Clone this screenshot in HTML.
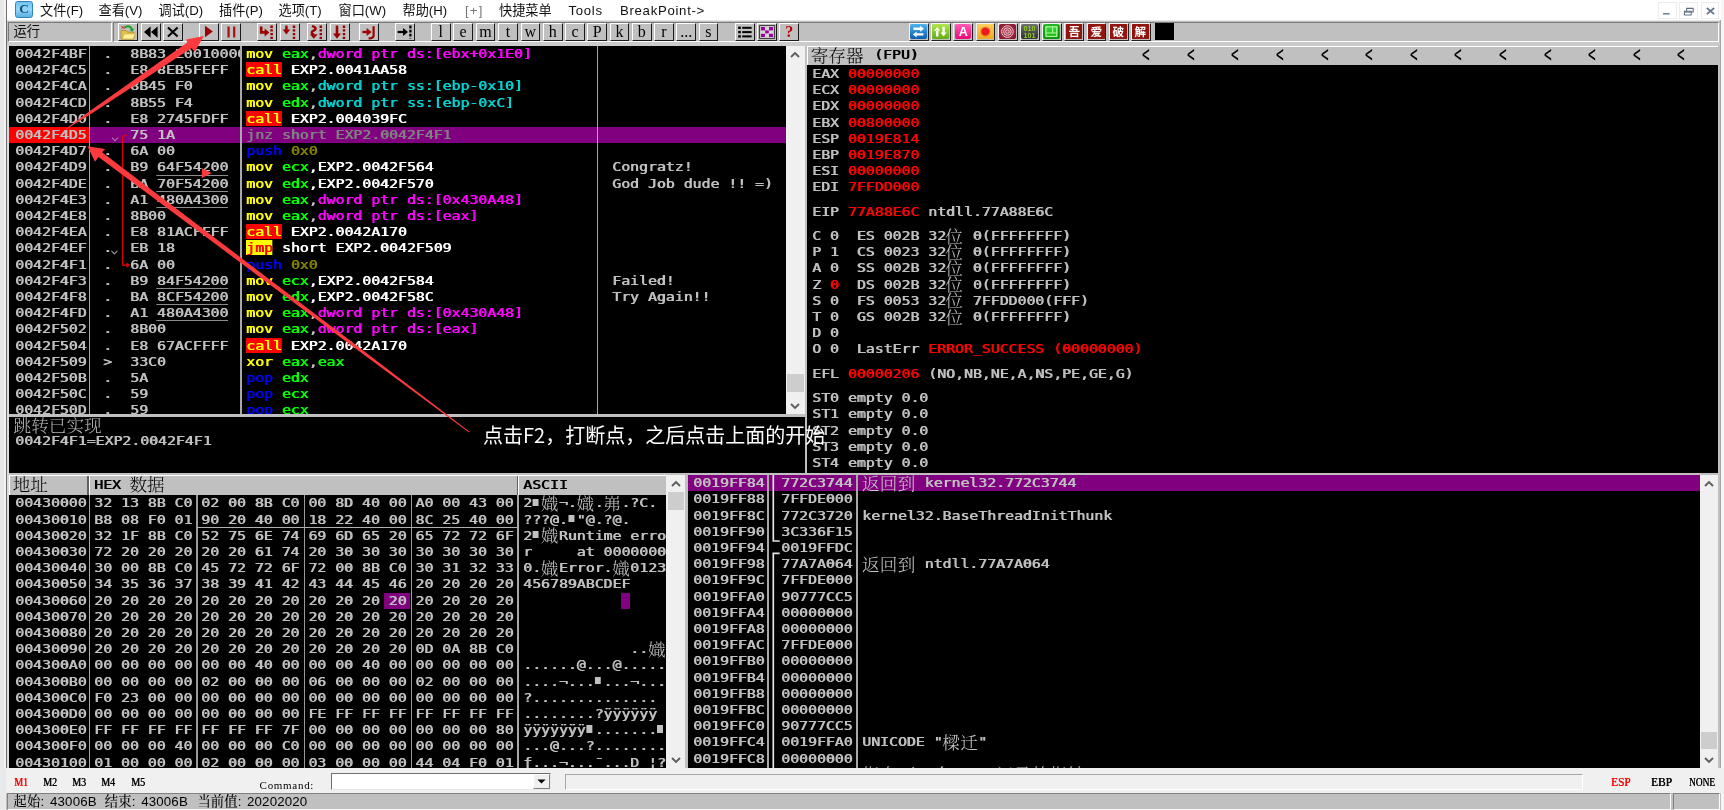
<!DOCTYPE html><html lang="zh"><head><meta charset="utf-8"><title>OllyDbg - EXP2</title><style>
*{box-sizing:border-box}
html,body{margin:0;padding:0}
body{will-change:transform;width:1724px;height:810px;position:relative;overflow:hidden;background:#c0c0c0;font-family:"Liberation Sans","Noto Sans CJK SC",sans-serif}
.abs,.p,.t,.cj,.b,.ic,.hl{position:absolute}
.p{background:#000;overflow:hidden}
.t{white-space:pre;text-shadow:.65px 0 0 currentColor;font:12.4px/16.2px "DejaVu Sans Mono","Liberation Mono",monospace;transform:scaleX(1.1962);transform-origin:0 0;color:#c0c0c0;height:16.2px}
.cj{white-space:pre;font:300 17.6px/18px "Noto Serif CJK SC","Noto Sans CJK SC",serif;color:#b4b4b4}
.sq{display:inline-block;position:relative;width:7.465px;height:16.2px;overflow:hidden;vertical-align:top;color:transparent;text-shadow:none}.sq::after{content:"";position:absolute;left:.6px;top:3.3px;width:4.7px;height:7.2px;background:#c0c0c0}
.g{color:#c0c0c0}.w{color:#fff}.y{color:#ff0}.gr{color:#0f0}.m{color:#f0f}.c{color:#00d2d2}.bl{color:#00f}.dy{color:#808000}.r{color:#f00}.dg{color:#808080}
.call{background:#f00;color:#ff0}.jmp{background:#ff0;color:#f00}
.u{border-bottom:1.6px solid #8c8c8c;display:inline-block;height:16.2px}
.b{background:#c0c0c0;border-top:1px solid #fff;border-left:1px solid #fff;border-right:1.5px solid #1a1a1a;border-bottom:1.5px solid #1a1a1a;text-align:center;color:#000;font:15px/15px "Liberation Serif",serif}
.b svg{position:absolute;left:0;top:0}
.ic{border:1px solid;border-color:#e8e8e8 #303030 #303030 #e8e8e8}
.vl{position:absolute;width:1.6px;background:#a8a8a8}
.menu span{position:absolute;top:.7px;font:13.2px/20px "Liberation Sans","Noto Sans CJK SC",sans-serif;color:#111;white-space:pre}
.sb{position:absolute;background:#f0f0f0}
.th{position:absolute;background:#cdcdcd}
.hd{position:absolute;background:#c0c0c0;border-top:1.3px solid #fff;border-left:1.3px solid #fff;overflow:hidden}
.hd .t{color:#000}
.hd .cj{color:#000}
.sm{position:absolute;font:bold 11.5px/12px "Liberation Serif","Noto Serif CJK SC",serif;color:#000;white-space:pre;transform-origin:0 0}
.st{position:absolute;top:794.4px;font:500 13.3px/16px "Liberation Sans","Noto Serif CJK SC",serif;color:#000;white-space:pre;letter-spacing:.15px}
</style></head><body>
<div class="abs" style="left:0;top:0;width:1724px;height:20.3px;background:#fff"></div>
<div class="abs" style="left:0;top:20.3px;width:1724px;height:1.4px;background:#e6e6e6"></div>
<div class="abs" style="left:0;top:0;width:4.2px;height:810px;background:#e5e7e9"></div>
<div class="abs" style="left:4.2px;top:0;width:1.4px;height:810px;background:#f3f3f3"></div>
<div class="abs" style="left:5.6px;top:0;width:1.5px;height:768px;background:#6c6c6c"></div>
<div class="abs" style="left:7.1px;top:21px;width:1.6px;height:747px;background:#dcdcdc"></div>
<div class="abs" style="left:1720.2px;top:20px;width:1px;height:790px;background:#a4a4a4"></div>
<div class="abs" style="left:1721.2px;top:0;width:2.8px;height:810px;background:#f6f6f6"></div>
<div class="abs" style="left:15px;top:1.2px;width:18px;height:16.6px;border-radius:2.6px;border:1.2px solid #2f84b4;background:linear-gradient(#6fc4ee,#93d6f7 50%,#58b2e2);text-align:center;font:bold 13.4px/13.6px 'Liberation Serif',serif;color:#174a78">C</div>
<div class="menu">
<span style="left:40.0px;">文件(F)</span>
<span style="left:98.5px;">查看(V)</span>
<span style="left:158.5px;">调试(D)</span>
<span style="left:219.0px;">插件(P)</span>
<span style="left:278.5px;">选项(T)</span>
<span style="left:338.5px;">窗口(W)</span>
<span style="left:402.5px;">帮助(H)</span>
<span style="left:465.0px;color:#777;letter-spacing:1.2px;">[+]</span>
<span style="left:499.0px;">快捷菜单</span>
<span style="left:568.5px;letter-spacing:.7px;">Tools</span>
<span style="left:620.0px;letter-spacing:.7px;">BreakPoint-&gt;</span>
</div>
<div class="abs" style="left:1658.0px;top:1.5px;width:18.6px;height:17.6px;border:1px solid #ececec;background:#fff"></div>
<div class="abs" style="left:1679.4px;top:1.5px;width:18.6px;height:17.6px;border:1px solid #ececec;background:#fff"></div>
<div class="abs" style="left:1700.6px;top:1.5px;width:18.6px;height:17.6px;border:1px solid #ececec;background:#fff"></div>
<svg class="abs" style="left:1658px;top:1.5px" width="62" height="18" viewBox="0 0 62 18"><g stroke="#62748a" stroke-width="1.4" fill="none"><path d="M5 11.8h6.6"/><path d="M26.4 9.2h6.8v3.8h-6.8z M28.6 9V6.4h6.6v3.6h-1.8" stroke-width="1.1"/><path d="M26.4 10h6.8" stroke-width="1.3"/><path d="M48.8 6l7.4 6.2M56.2 6l-7.4 6.2" stroke-width="1.7"/></g></svg>
<div class="abs" style="left:7.1px;top:21.4px;width:1713px;height:21.2px;background:#c0c0c0"></div>
<div class="abs" style="left:8px;top:21.6px;width:103.5px;height:20.6px;background:#c0c0c0;border:1.3px solid;border-color:#7a7a7a #fff #fff #7a7a7a"></div>
<div class="abs" style="left:13.4px;top:22px;font:13.3px/17px 'Noto Sans CJK SC',sans-serif;color:#111">运行</div>
<div class="abs" style="left:112.8px;top:21.6px;width:1606.4px;height:20.6px;border:1.3px solid;border-color:#7a7a7a #fff #fff #7a7a7a"></div>
<div class="abs" style="left:7.1px;top:42.1px;width:1713px;height:3.9px;background:#cbcbcb"></div>
<div class="b" style="left:118.2px;top:22.6px;width:20.0px;height:18.2px;"><svg width="18" height="16" viewBox="0 0 18 16"><path d="M2 6.5h5l1.4 1.6H15V15H2z" fill="#e9c24a" stroke="#b08a20" stroke-width=".8"/><path d="M3.2 15l2-5.2h11L14.2 15z" fill="#fff29a" stroke="#c9a63a" stroke-width=".7"/><path d="M5 3.2c3-3.4 7.6-2.2 8.6 1.6l1.6-.4-1.8 3.2-3-1.8 1.5-.4C11 3 8 2.6 6.4 4.4z" fill="#14a21e"/><path d="M2.2 2.2l3.4 2.4M2.4 4.8l3-2.6" stroke="#e02020" stroke-width="1"/></svg></div>
<div class="b" style="left:140.8px;top:22.6px;width:20.0px;height:18.2px;"><svg width="18" height="16" viewBox="0 0 18 16"><path d="M8.6 2.4v11.4L2 8.1zM15.6 2.4v11.4L9 8.1z" fill="#000"/></svg></div>
<div class="b" style="left:162.9px;top:22.6px;width:20.0px;height:18.2px;"><svg width="18" height="16" viewBox="0 0 18 16"><path d="M4 3.6l9.6 9M13.6 3.6l-9.6 9" stroke="#000" stroke-width="2.1" fill="none"/></svg></div>
<div class="b" style="left:198.8px;top:22.6px;width:20.0px;height:18.2px;"><svg width="18" height="16" viewBox="0 0 18 16"><path d="M5 1.8l7.8 5.7L5 13.2z" fill="#9c0000"/></svg></div>
<div class="b" style="left:220.9px;top:22.6px;width:20.0px;height:18.2px;"><svg width="18" height="16" viewBox="0 0 18 16"><path d="M6.6 2.6v11M12.2 2.6v11" stroke="#b01010" stroke-width="2.3" fill="none"/></svg></div>
<div class="b" style="left:257.3px;top:22.6px;width:20.0px;height:18.2px;"><svg width="18" height="16" viewBox="0 0 18 16"><path d="M3.2 2.4v6h4.6" stroke="#9c0000" stroke-width="2.6" fill="none"/><path d="M6.6 4.4l4.8 4L6.6 12.4z" fill="#9c0000"/><path d="M13.6 1.6v13.4" stroke="#9c0000" stroke-width="2.5" stroke-dasharray="2.3 1.4" fill="none"/></svg></div>
<div class="b" style="left:279.6px;top:22.6px;width:20.0px;height:18.2px;"><svg width="18" height="16" viewBox="0 0 18 16"><path d="M5.4 1.6v5" stroke="#9c0000" stroke-width="2.5" fill="none"/><path d="M1.6 5.4h7.6L5.4 10.4z" fill="#9c0000"/><path d="M13 1.6v13.4" stroke="#9c0000" stroke-width="2.5" stroke-dasharray="2.3 1.4" fill="none"/></svg></div>
<div class="b" style="left:307.4px;top:22.6px;width:20.0px;height:18.2px;"><svg width="18" height="16" viewBox="0 0 18 16"><path d="M4 2.2c4.4 1 4.4 3.2 1.6 4.4c-2.8 1.2-2.4 2.8 0.4 4" stroke="#9c0000" stroke-width="2.4" fill="none"/><path d="M1.8 10.2h8L5.8 14.8z" fill="#9c0000"/><path d="M12.8 1.6v13.4" stroke="#9c0000" stroke-width="2.5" stroke-dasharray="2.3 1.4" fill="none"/></svg></div>
<div class="b" style="left:329.6px;top:22.6px;width:20.0px;height:18.2px;"><svg width="18" height="16" viewBox="0 0 18 16"><path d="M6 1.6v9.4" stroke="#9c0000" stroke-width="2.6" fill="none"/><path d="M2 9.6h8L6 14.8z" fill="#9c0000"/><path d="M13 1.6v13.4" stroke="#9c0000" stroke-width="2.5" stroke-dasharray="2.3 1.4" fill="none"/></svg></div>
<div class="b" style="left:359.4px;top:22.6px;width:20.0px;height:18.2px;"><svg width="18" height="16" viewBox="0 0 18 16"><path d="M2.4 8h6" stroke="#9c0000" stroke-width="2.4" fill="none"/><path d="M6.6 4l5 4-5 4z" fill="#9c0000"/><path d="M13.6 2.2v9c0 2.6-1.6 3.2-5 3.2" stroke="#9c0000" stroke-width="2.2" fill="none"/></svg></div>
<div class="b" style="left:395.2px;top:22.6px;width:20.0px;height:18.2px;"><svg width="18" height="16" viewBox="0 0 18 16"><path d="M1.6 8h7" stroke="#000" stroke-width="2.2" fill="none"/><path d="M7 4l5 4-5 4z" fill="#000"/><path d="M14.4 1.6v13" stroke="#000" stroke-width="2.3" stroke-dasharray="2.8 1.3" fill="none"/></svg></div>
<div class="b" style="left:431.0px;top:22.6px;width:19.6px;height:18.2px;font-size:16px;line-height:16.6px;">l</div>
<div class="b" style="left:453.2px;top:22.6px;width:19.6px;height:18.2px;font-size:16px;line-height:16.6px;">e</div>
<div class="b" style="left:475.6px;top:22.6px;width:19.6px;height:18.2px;font-size:16px;line-height:16.6px;">m</div>
<div class="b" style="left:498.2px;top:22.6px;width:19.6px;height:18.2px;font-size:16px;line-height:16.6px;">t</div>
<div class="b" style="left:520.6px;top:22.6px;width:19.6px;height:18.2px;font-size:16px;line-height:16.6px;">w</div>
<div class="b" style="left:543.0px;top:22.6px;width:19.6px;height:18.2px;font-size:16px;line-height:16.6px;">h</div>
<div class="b" style="left:565.2px;top:22.6px;width:19.6px;height:18.2px;font-size:16px;line-height:16.6px;">c</div>
<div class="b" style="left:587.4px;top:22.6px;width:19.6px;height:18.2px;font-size:16px;line-height:16.6px;">P</div>
<div class="b" style="left:609.8px;top:22.6px;width:19.6px;height:18.2px;font-size:16px;line-height:16.6px;">k</div>
<div class="b" style="left:632.0px;top:22.6px;width:19.6px;height:18.2px;font-size:16px;line-height:16.6px;">b</div>
<div class="b" style="left:654.2px;top:22.6px;width:19.6px;height:18.2px;font-size:16px;line-height:16.6px;">r</div>
<div class="b" style="left:676.4px;top:22.6px;width:19.6px;height:18.2px;font-size:16px;line-height:16.6px;letter-spacing:0px;">...</div>
<div class="b" style="left:698.6px;top:22.6px;width:19.6px;height:18.2px;font-size:16px;line-height:16.6px;">s</div>
<div class="b" style="left:735.0px;top:22.6px;width:19.6px;height:18.2px;"><svg width="18" height="16" viewBox="0 0 18 16"><g fill="#000"><rect x="2.2" y="2.6" width="2.6" height="2.4"/><rect x="6.2" y="2.8" width="9.4" height="2"/><rect x="2.2" y="6.9" width="2.6" height="2.4"/><rect x="6.2" y="7.1" width="9.4" height="2"/><rect x="2.2" y="11.2" width="2.6" height="2.4"/><rect x="6.2" y="11.4" width="9.4" height="2"/></g></svg></div>
<div class="b" style="left:757.2px;top:22.6px;width:19.6px;height:18.2px;"><svg width="18" height="16" viewBox="0 0 18 16"><rect x="1.6" y="1.6" width="14.8" height="12.8" fill="#d8d8d8" stroke="#333" stroke-width="1"/><g fill="#a000a0"><rect x="3" y="3" width="4" height="3.4"/><rect x="11" y="3" width="4" height="3.4"/><rect x="7.2" y="6.4" width="3.6" height="3"/><rect x="3" y="9.8" width="4" height="3.2"/><rect x="11" y="9.8" width="4" height="3.2"/></g></svg></div>
<div class="b" style="left:779.4px;top:22.6px;width:19.6px;height:18.2px;"><b style="color:#c00000;font:bold 16px/15px 'Liberation Serif',serif">?</b></div>
<div class="ic" style="left:909.0px;top:22.6px;width:19.8px;height:18.2px;background:#c0c0c0;border-width:1px 1.4px 1.4px 1px;border-color:#f4f4f4 #222 #222 #f4f4f4"><div style="position:absolute;left:.3px;top:.3px;width:16.8px;height:15.2px;border-radius:2.6px;background:linear-gradient(#4ab4f0,#0a5cae);overflow:hidden"><svg style="position:absolute;left:0;top:0" width="16.8" height="15.2" viewBox="0 0 16.8 15.2"><g fill="#fff"><path d="M3.4 3.6h6.8v2.4H3.4zM10.2 1.8v6L14 4.8z"/><path d="M6.6 9.2h6.8v2.4H6.6zM6.6 7.4v6L2.8 10.4z"/></g></svg></div></div>
<div class="ic" style="left:931.2px;top:22.6px;width:19.8px;height:18.2px;background:#c0c0c0;border-width:1px 1.4px 1.4px 1px;border-color:#f4f4f4 #222 #222 #f4f4f4"><div style="position:absolute;left:.3px;top:.3px;width:16.8px;height:15.2px;border-radius:2.6px;background:linear-gradient(#b0e848,#62ac14);overflow:hidden"><svg style="position:absolute;left:0;top:0" width="16.8" height="15.2" viewBox="0 0 16.8 15.2"><g fill="#fff"><path d="M4 6.4h2.4v6.2H4zM2.2 7h6L5.2 2.8z"/><path d="M10.4 2.8h2.4V9h-2.4zM8.6 8.4h6l-3 4.2z"/></g></svg></div></div>
<div class="ic" style="left:953.4px;top:22.6px;width:19.8px;height:18.2px;background:#c0c0c0;border-width:1px 1.4px 1.4px 1px;border-color:#f4f4f4 #222 #222 #f4f4f4"><div style="position:absolute;left:.3px;top:.3px;width:16.8px;height:15.2px;border-radius:2.6px;background:linear-gradient(#ff5cb4,#f00878);overflow:hidden"><svg style="position:absolute;left:0;top:0" width="16.8" height="15.2" viewBox="0 0 16.8 15.2"><text x="8.4" y="12.2" text-anchor="middle" font-family="Liberation Sans,sans-serif" font-weight="bold" font-size="12.6" fill="#fff">A</text></svg></div></div>
<div class="ic" style="left:975.6px;top:22.6px;width:19.8px;height:18.2px;background:#c0c0c0;border-width:1px 1.4px 1.4px 1px;border-color:#f4f4f4 #222 #222 #f4f4f4"><div style="position:absolute;left:.3px;top:.3px;width:16.8px;height:15.2px;border-radius:2.6px;background:linear-gradient(#fad060,#f0a820);overflow:hidden"><svg style="position:absolute;left:0;top:0" width="16.8" height="15.2" viewBox="0 0 16.8 15.2"><circle cx="8.4" cy="7.6" r="4.9" fill="#e86a30"/><circle cx="8.4" cy="7.6" r="3.7" fill="#f01818"/></svg></div></div>
<div class="ic" style="left:997.8px;top:22.6px;width:19.8px;height:18.2px;background:#c0c0c0;border-width:1px 1.4px 1.4px 1px;border-color:#f4f4f4 #222 #222 #f4f4f4"><div style="position:absolute;left:.3px;top:.3px;width:16.8px;height:15.2px;border-radius:2.6px;background:radial-gradient(#c04860,#7c0c22);overflow:hidden"><svg style="position:absolute;left:0;top:0" width="16.8" height="15.2" viewBox="0 0 16.8 15.2"><g fill="none" stroke="#f0c8d0" stroke-width="1"><circle cx="8.4" cy="7.6" r="5.8"/><circle cx="8.4" cy="7.6" r="3.8"/><circle cx="8.4" cy="7.6" r="1.8"/></g></svg></div></div>
<div class="ic" style="left:1020.0px;top:22.6px;width:19.8px;height:18.2px;background:#c0c0c0;border-width:1px 1.4px 1.4px 1px;border-color:#f4f4f4 #222 #222 #f4f4f4"><div style="position:absolute;left:.3px;top:.3px;width:16.8px;height:15.2px;border-radius:2.6px;background:linear-gradient(#707070,#303030);overflow:hidden"><svg style="position:absolute;left:0;top:0" width="16.8" height="15.2" viewBox="0 0 16.8 15.2"><text x="8.4" y="6.9" text-anchor="middle" font-family="Liberation Sans,sans-serif" font-weight="bold" font-size="7.2" fill="#90d020">010</text><text x="8.4" y="13.9" text-anchor="middle" font-family="Liberation Sans,sans-serif" font-weight="bold" font-size="7.2" fill="#90d020">101</text></svg></div></div>
<div class="ic" style="left:1042.2px;top:22.6px;width:19.8px;height:18.2px;background:#c0c0c0;border-width:1px 1.4px 1.4px 1px;border-color:#f4f4f4 #222 #222 #f4f4f4"><div style="position:absolute;left:.3px;top:.3px;width:16.8px;height:15.2px;border-radius:2.6px;background:linear-gradient(#40e040,#10b010);overflow:hidden"><svg style="position:absolute;left:0;top:0" width="16.8" height="15.2" viewBox="0 0 16.8 15.2"><g fill="none" stroke="#b8f8a0" stroke-width="1.1"><rect x="3" y="2.8" width="10.8" height="9.6"/><path d="M9.6 2.8v6.2M3 9h10.8"/></g><rect x="1" y="1" width="14.8" height="13.2" rx="2" fill="none" stroke="#0a8a0a" stroke-width="1.2"/></svg></div></div>
<div class="ic" style="left:1064.4px;top:22.6px;width:19.8px;height:18.2px;background:#c0c0c0;border-width:1px 1.4px 1.4px 1px;border-color:#f4f4f4 #222 #222 #f4f4f4"><div style="position:absolute;left:.3px;top:.3px;width:16.8px;height:15.2px;border-radius:0.5px;background:#92140e;overflow:hidden"><svg style="position:absolute;left:0;top:0" width="16.8" height="15.2" viewBox="0 0 16.8 15.2"><text x="8.4" y="11.9" text-anchor="middle" font-family="Noto Sans CJK SC,sans-serif" font-weight="700" font-size="11.6" fill="#fff">吾</text></svg></div></div>
<div class="ic" style="left:1086.6px;top:22.6px;width:19.8px;height:18.2px;background:#c0c0c0;border-width:1px 1.4px 1.4px 1px;border-color:#f4f4f4 #222 #222 #f4f4f4"><div style="position:absolute;left:.3px;top:.3px;width:16.8px;height:15.2px;border-radius:0.5px;background:#92140e;overflow:hidden"><svg style="position:absolute;left:0;top:0" width="16.8" height="15.2" viewBox="0 0 16.8 15.2"><text x="8.4" y="11.9" text-anchor="middle" font-family="Noto Sans CJK SC,sans-serif" font-weight="700" font-size="11.6" fill="#fff">爱</text></svg></div></div>
<div class="ic" style="left:1108.8px;top:22.6px;width:19.8px;height:18.2px;background:#c0c0c0;border-width:1px 1.4px 1.4px 1px;border-color:#f4f4f4 #222 #222 #f4f4f4"><div style="position:absolute;left:.3px;top:.3px;width:16.8px;height:15.2px;border-radius:0.5px;background:#92140e;overflow:hidden"><svg style="position:absolute;left:0;top:0" width="16.8" height="15.2" viewBox="0 0 16.8 15.2"><text x="8.4" y="11.9" text-anchor="middle" font-family="Noto Sans CJK SC,sans-serif" font-weight="700" font-size="11.6" fill="#fff">破</text></svg></div></div>
<div class="ic" style="left:1131.0px;top:22.6px;width:19.8px;height:18.2px;background:#c0c0c0;border-width:1px 1.4px 1.4px 1px;border-color:#f4f4f4 #222 #222 #f4f4f4"><div style="position:absolute;left:.3px;top:.3px;width:16.8px;height:15.2px;border-radius:0.5px;background:#92140e;overflow:hidden"><svg style="position:absolute;left:0;top:0" width="16.8" height="15.2" viewBox="0 0 16.8 15.2"><text x="8.4" y="11.9" text-anchor="middle" font-family="Noto Sans CJK SC,sans-serif" font-weight="700" font-size="11.6" fill="#fff">解</text></svg></div></div>
<div class="abs" style="left:1154.6px;top:22.8px;width:19.6px;height:17.6px;background:#000"></div>
<div class="p" style="left:8.8px;top:46.0px;width:777.0px;height:368.2px">
<div class="hl" style="left:0;top:81.30px;width:80.2px;height:16.20px;background:#f00"></div>
<div class="hl" style="left:81.6px;top:81.30px;width:700.0px;height:16.20px;background:#800080"></div>
<div class="vl" style="left:79.8px;top:0;height:368.2px"></div>
<div class="vl" style="left:231.4px;top:0;height:368.2px"></div>
<div class="vl" style="left:588.0px;top:0;height:368.2px"></div>
<div class="abs" style="left:81.6px;top:0;width:149.8px;height:368.2px;overflow:hidden">
<div class="t " style="left:13.10px;top:0.00px;">.  </div>
<div class="t " style="left:39.60px;top:0.00px;">8B83 E0010000</div>
<div class="t " style="left:13.10px;top:16.20px;">.  </div>
<div class="t " style="left:39.60px;top:16.20px;">E8 8EB5FEFF</div>
<div class="t " style="left:13.10px;top:32.40px;">.  </div>
<div class="t " style="left:39.60px;top:32.40px;">8B45 F0</div>
<div class="t " style="left:13.10px;top:48.60px;">.  </div>
<div class="t " style="left:39.60px;top:48.60px;">8B55 F4</div>
<div class="t " style="left:13.10px;top:64.80px;">.  </div>
<div class="t " style="left:39.60px;top:64.80px;">E8 2745FDFF</div>
<div class="t " style="left:13.10px;top:81.00px;">   </div>
<div class="t " style="left:39.60px;top:81.00px;">75 1A</div>
<div class="t " style="left:13.10px;top:97.20px;">.  </div>
<div class="t " style="left:39.60px;top:97.20px;">6A 00</div>
<div class="t " style="left:13.10px;top:113.40px;">.  </div>
<div class="t " style="left:39.60px;top:113.40px;">B9 <span class="u">64F54200</span></div>
<div class="t " style="left:13.10px;top:129.60px;">.  </div>
<div class="t " style="left:39.60px;top:129.60px;">BA <span class="u">70F54200</span></div>
<div class="t " style="left:13.10px;top:145.80px;">.  </div>
<div class="t " style="left:39.60px;top:145.80px;">A1 <span class="u">480A4300</span></div>
<div class="t " style="left:13.10px;top:162.00px;">.  </div>
<div class="t " style="left:39.60px;top:162.00px;">8B00</div>
<div class="t " style="left:13.10px;top:178.20px;">.  </div>
<div class="t " style="left:39.60px;top:178.20px;">E8 81ACFFFF</div>
<div class="t " style="left:13.10px;top:194.40px;">.  </div>
<div class="t " style="left:39.60px;top:194.40px;">EB 18</div>
<div class="t " style="left:13.10px;top:210.60px;">.  </div>
<div class="t " style="left:39.60px;top:210.60px;">6A 00</div>
<div class="t " style="left:13.10px;top:226.80px;">.  </div>
<div class="t " style="left:39.60px;top:226.80px;">B9 <span class="u">84F54200</span></div>
<div class="t " style="left:13.10px;top:243.00px;">.  </div>
<div class="t " style="left:39.60px;top:243.00px;">BA <span class="u">8CF54200</span></div>
<div class="t " style="left:13.10px;top:259.20px;">.  </div>
<div class="t " style="left:39.60px;top:259.20px;">A1 <span class="u">480A4300</span></div>
<div class="t " style="left:13.10px;top:275.40px;">.  </div>
<div class="t " style="left:39.60px;top:275.40px;">8B00</div>
<div class="t " style="left:13.10px;top:291.60px;">.  </div>
<div class="t " style="left:39.60px;top:291.60px;">E8 67ACFFFF</div>
<div class="t " style="left:13.10px;top:307.80px;">&gt;  </div>
<div class="t " style="left:39.60px;top:307.80px;">33C0</div>
<div class="t " style="left:13.10px;top:324.00px;">.  </div>
<div class="t " style="left:39.60px;top:324.00px;">5A</div>
<div class="t " style="left:13.10px;top:340.20px;">.  </div>
<div class="t " style="left:39.60px;top:340.20px;">59</div>
<div class="t " style="left:13.10px;top:356.40px;">.  </div>
<div class="t " style="left:39.60px;top:356.40px;">59</div>
</div>
<div class="t " style="left:6.20px;top:0.00px;">0042F4BF</div>
<div class="t " style="left:237.00px;top:0.00px;"><span class="y">mov </span><span class="gr">eax</span><span class="g">,</span><span class="m">dword ptr ds:[ebx+0x1E0]</span></div>
<div class="t " style="left:6.20px;top:16.20px;">0042F4C5</div>
<div class="t " style="left:237.00px;top:16.20px;"><span class="call">call</span><span class="w"> EXP2.0041AA58</span></div>
<div class="t " style="left:6.20px;top:32.40px;">0042F4CA</div>
<div class="t " style="left:237.00px;top:32.40px;"><span class="y">mov </span><span class="gr">eax</span><span class="g">,</span><span class="c">dword ptr ss:[ebp-0x10]</span></div>
<div class="t " style="left:6.20px;top:48.60px;">0042F4CD</div>
<div class="t " style="left:237.00px;top:48.60px;"><span class="y">mov </span><span class="gr">edx</span><span class="g">,</span><span class="c">dword ptr ss:[ebp-0xC]</span></div>
<div class="t " style="left:6.20px;top:64.80px;">0042F4D0</div>
<div class="t " style="left:237.00px;top:64.80px;"><span class="call">call</span><span class="w"> EXP2.004039FC</span></div>
<div class="t " style="left:6.20px;top:81.00px;">0042F4D5</div>
<div class="t " style="left:237.00px;top:81.00px;"><span class="dg">jnz short EXP2.0042F4F1</span></div>
<div class="t " style="left:6.20px;top:97.20px;">0042F4D7</div>
<div class="t " style="left:237.00px;top:97.20px;"><span class="bl">push </span><span class="dy">0x0</span></div>
<div class="t " style="left:6.20px;top:113.40px;">0042F4D9</div>
<div class="t " style="left:237.00px;top:113.40px;"><span class="y">mov </span><span class="gr">ecx</span><span class="w">,EXP2.0042F564</span></div>
<div class="t " style="left:603.20px;top:113.40px;">Congratz!</div>
<div class="t " style="left:6.20px;top:129.60px;">0042F4DE</div>
<div class="t " style="left:237.00px;top:129.60px;"><span class="y">mov </span><span class="gr">edx</span><span class="w">,EXP2.0042F570</span></div>
<div class="t " style="left:603.20px;top:129.60px;">God Job dude !! =)</div>
<div class="t " style="left:6.20px;top:145.80px;">0042F4E3</div>
<div class="t " style="left:237.00px;top:145.80px;"><span class="y">mov </span><span class="gr">eax</span><span class="g">,</span><span class="m">dword ptr ds:[0x430A48]</span></div>
<div class="t " style="left:6.20px;top:162.00px;">0042F4E8</div>
<div class="t " style="left:237.00px;top:162.00px;"><span class="y">mov </span><span class="gr">eax</span><span class="g">,</span><span class="m">dword ptr ds:[eax]</span></div>
<div class="t " style="left:6.20px;top:178.20px;">0042F4EA</div>
<div class="t " style="left:237.00px;top:178.20px;"><span class="call">call</span><span class="w"> EXP2.0042A170</span></div>
<div class="t " style="left:6.20px;top:194.40px;">0042F4EF</div>
<div class="t " style="left:237.00px;top:194.40px;"><span class="jmp">jmp</span><span class="w"> short EXP2.0042F509</span></div>
<div class="t " style="left:6.20px;top:210.60px;">0042F4F1</div>
<div class="t " style="left:237.00px;top:210.60px;"><span class="bl">push </span><span class="dy">0x0</span></div>
<div class="t " style="left:6.20px;top:226.80px;">0042F4F3</div>
<div class="t " style="left:237.00px;top:226.80px;"><span class="y">mov </span><span class="gr">ecx</span><span class="w">,EXP2.0042F584</span></div>
<div class="t " style="left:603.20px;top:226.80px;">Failed!</div>
<div class="t " style="left:6.20px;top:243.00px;">0042F4F8</div>
<div class="t " style="left:237.00px;top:243.00px;"><span class="y">mov </span><span class="gr">edx</span><span class="w">,EXP2.0042F58C</span></div>
<div class="t " style="left:603.20px;top:243.00px;">Try Again!!</div>
<div class="t " style="left:6.20px;top:259.20px;">0042F4FD</div>
<div class="t " style="left:237.00px;top:259.20px;"><span class="y">mov </span><span class="gr">eax</span><span class="g">,</span><span class="m">dword ptr ds:[0x430A48]</span></div>
<div class="t " style="left:6.20px;top:275.40px;">0042F502</div>
<div class="t " style="left:237.00px;top:275.40px;"><span class="y">mov </span><span class="gr">eax</span><span class="g">,</span><span class="m">dword ptr ds:[eax]</span></div>
<div class="t " style="left:6.20px;top:291.60px;">0042F504</div>
<div class="t " style="left:237.00px;top:291.60px;"><span class="call">call</span><span class="w"> EXP2.0042A170</span></div>
<div class="t " style="left:6.20px;top:307.80px;">0042F509</div>
<div class="t " style="left:237.00px;top:307.80px;"><span class="y">xor </span><span class="gr">eax</span><span class="g">,</span><span class="gr">eax</span></div>
<div class="t " style="left:6.20px;top:324.00px;">0042F50B</div>
<div class="t " style="left:237.00px;top:324.00px;"><span class="bl">pop </span><span class="gr">edx</span></div>
<div class="t " style="left:6.20px;top:340.20px;">0042F50C</div>
<div class="t " style="left:237.00px;top:340.20px;"><span class="bl">pop </span><span class="gr">ecx</span></div>
<div class="t " style="left:6.20px;top:356.40px;">0042F50D</div>
<div class="t " style="left:237.00px;top:356.40px;"><span class="bl">pop </span><span class="gr">ecx</span></div>
<svg class="abs" style="left:0;top:0" width="777" height="369" viewBox="8.8 46.0 777 369">
<path d="M111.8 137.6l3 3 3-3" stroke="#b070b0" stroke-width="1.1" fill="none"/>
<path d="M111.2 250.9l3 3 3-3" stroke="#9a9a9a" stroke-width="1.1" fill="none"/>
<path d="M126.6 135.4l-2.6.2-1.6 1.4V265.1h5" stroke="#e60000" stroke-width="1.1" fill="none"/>
<path d="M126.2 262.5l3.8 2.6-3.8 2.6z" fill="#e60000"/>
</svg>
</div>
<div class="sb" style="left:785.8px;top:45.9px;width:19px;height:368.3px"></div>
<div class="th" style="left:787.2px;top:374.4px;width:16.4px;height:17.8px"></div>
<svg class="abs" style="left:789.3px;top:51.2px" width="12" height="8" viewBox="-6 -4 12 8"><path d="M-4 2.0L0 -2.0L4 2.0" stroke="#5e5e5e" stroke-width="1.9" fill="none"/></svg>
<svg class="abs" style="left:789.3px;top:402.0px" width="12" height="8" viewBox="-6 -4 12 8"><path d="M-4 -2.0L0 2.0L4 -2.0" stroke="#5e5e5e" stroke-width="1.9" fill="none"/></svg>
<div class="p" style="left:8.8px;top:416.6px;width:796px;height:56px">
<div class="cj" style="left:4.80px;top:-1.10px;">跳转已实现</div>
<div class="t " style="left:6.20px;top:16.40px;">0042F4F1=EXP2.0042F4F1</div>
</div>
<div class="hd" style="left:806.8px;top:45.8px;width:911.7px;height:18.9px">
<div class="cj" style="left:2.90px;top:-1.20px;color:#000">寄存器</div>
<div class="t " style="left:56.98px;top:0.65px;"> (FPU)</div>
<div class="t " style="left:334.50px;top:0.30px;text-shadow:none;transform:scale(1.029,1.8);transform-origin:0 53%">&lt;</div>
<div class="t " style="left:379.10px;top:0.30px;text-shadow:none;transform:scale(1.029,1.8);transform-origin:0 53%">&lt;</div>
<div class="t " style="left:423.70px;top:0.30px;text-shadow:none;transform:scale(1.029,1.8);transform-origin:0 53%">&lt;</div>
<div class="t " style="left:468.30px;top:0.30px;text-shadow:none;transform:scale(1.029,1.8);transform-origin:0 53%">&lt;</div>
<div class="t " style="left:512.90px;top:0.30px;text-shadow:none;transform:scale(1.029,1.8);transform-origin:0 53%">&lt;</div>
<div class="t " style="left:557.50px;top:0.30px;text-shadow:none;transform:scale(1.029,1.8);transform-origin:0 53%">&lt;</div>
<div class="t " style="left:602.10px;top:0.30px;text-shadow:none;transform:scale(1.029,1.8);transform-origin:0 53%">&lt;</div>
<div class="t " style="left:646.70px;top:0.30px;text-shadow:none;transform:scale(1.029,1.8);transform-origin:0 53%">&lt;</div>
<div class="t " style="left:691.30px;top:0.30px;text-shadow:none;transform:scale(1.029,1.8);transform-origin:0 53%">&lt;</div>
<div class="t " style="left:735.90px;top:0.30px;text-shadow:none;transform:scale(1.029,1.8);transform-origin:0 53%">&lt;</div>
<div class="t " style="left:780.50px;top:0.30px;text-shadow:none;transform:scale(1.029,1.8);transform-origin:0 53%">&lt;</div>
<div class="t " style="left:825.10px;top:0.30px;text-shadow:none;transform:scale(1.029,1.8);transform-origin:0 53%">&lt;</div>
<div class="t " style="left:869.70px;top:0.30px;text-shadow:none;transform:scale(1.029,1.8);transform-origin:0 53%">&lt;</div>
</div>
<div class="p" style="left:806.8px;top:64.7px;width:911.7px;height:407.9px">
<div class="t " style="left:5.00px;top:1.40px;">EAX <span class="r">00000000</span></div>
<div class="t " style="left:5.00px;top:17.60px;">ECX <span class="r">00000000</span></div>
<div class="t " style="left:5.00px;top:33.80px;">EDX <span class="r">00000000</span></div>
<div class="t " style="left:5.00px;top:50.00px;">EBX <span class="r">00800000</span></div>
<div class="t " style="left:5.00px;top:66.20px;">ESP <span class="r">0019E814</span></div>
<div class="t " style="left:5.00px;top:82.40px;">EBP <span class="r">0019E870</span></div>
<div class="t " style="left:5.00px;top:98.60px;">ESI <span class="r">00000000</span></div>
<div class="t " style="left:5.00px;top:114.80px;">EDI <span class="r">7FFDD000</span></div>
<div class="t " style="left:5.00px;top:139.60px;">EIP <span class="r">77A88E6C</span> ntdll.77A88E6C</div>
<div class="t " style="left:5.00px;top:163.40px;">C 0  ES 002B 32   0(FFFFFFFF)</div>
<div class="cj" style="left:138.35px;top:161.90px;color:#c0c0c0">位</div>
<div class="t " style="left:5.00px;top:179.60px;">P 1  CS 0023 32   0(FFFFFFFF)</div>
<div class="cj" style="left:138.35px;top:178.10px;color:#c0c0c0">位</div>
<div class="t " style="left:5.00px;top:195.80px;">A 0  SS 002B 32   0(FFFFFFFF)</div>
<div class="cj" style="left:138.35px;top:194.30px;color:#c0c0c0">位</div>
<div class="t " style="left:5.00px;top:212.00px;">Z <span class="r">0</span>  DS 002B 32   0(FFFFFFFF)</div>
<div class="cj" style="left:138.35px;top:210.50px;color:#c0c0c0">位</div>
<div class="t " style="left:5.00px;top:228.20px;">S 0  FS 0053 32   7FFDD000(FFF)</div>
<div class="cj" style="left:138.35px;top:226.70px;color:#c0c0c0">位</div>
<div class="t " style="left:5.00px;top:244.40px;">T 0  GS 002B 32   0(FFFFFFFF)</div>
<div class="cj" style="left:138.35px;top:242.90px;color:#c0c0c0">位</div>
<div class="t " style="left:5.00px;top:260.60px;">D 0</div>
<div class="t " style="left:5.00px;top:276.80px;">O 0  LastErr <span class="r">ERROR_SUCCESS (00000000)</span></div>
<div class="t " style="left:5.00px;top:301.60px;">EFL <span class="r">00000206</span> (NO,NB,NE,A,NS,PE,GE,G)</div>
<div class="t " style="left:5.00px;top:325.60px;">ST0 empty 0.0</div>
<div class="t " style="left:5.00px;top:341.80px;">ST1 empty 0.0</div>
<div class="t " style="left:5.00px;top:358.00px;">ST2 empty 0.0</div>
<div class="t " style="left:5.00px;top:374.20px;">ST3 empty 0.0</div>
<div class="t " style="left:5.00px;top:390.40px;">ST4 empty 0.0</div>
</div>
<div class="hd" style="left:8.8px;top:475.2px;width:657.6px;height:19.4px">
<div class="cj" style="left:2.90px;top:-1.00px;color:#000">地址</div>
<div class="t " style="left:83.90px;top:0.80px;">HEX </div>
<div class="cj" style="left:119.62px;top:-1.00px;color:#000">数据</div>
<div class="t " style="left:512.90px;top:0.80px;">ASCII</div>
<div class="abs" style="left:77.7px;top:0;width:1.2px;height:19px;background:#606060"></div><div class="abs" style="left:79.0px;top:0;width:1.3px;height:19px;background:#fff"></div>
<div class="abs" style="left:507.1px;top:0;width:1.2px;height:19px;background:#606060"></div><div class="abs" style="left:508.4px;top:0;width:1.3px;height:19px;background:#fff"></div>
</div>
<div class="p" style="left:8.8px;top:494.6px;width:657.6px;height:273.7px">
<div class="vl" style="left:79.8px;top:0;height:280px"></div>
<div class="vl" style="left:508.6px;top:0;height:280px"></div>
<div class="vl" style="left:187.6px;top:0;height:280px;width:1.2px;background:#9a9a9a"></div>
<div class="vl" style="left:294.8px;top:0;height:280px;width:1.2px;background:#9a9a9a"></div>
<div class="vl" style="left:402.0px;top:0;height:280px;width:1.2px;background:#9a9a9a"></div>
<div class="abs" style="left:188.2px;top:32.2px;width:320.4px;height:1.3px;background:#b0b0b0"></div>
<div class="hl" style="left:375.4px;top:98.0px;width:26.2px;height:16.20px;background:#800080"></div>
<div class="hl" style="left:612.2px;top:98.0px;width:8.93px;height:16.20px;background:#800080"></div>
<div class="t " style="left:6.20px;top:0.80px;">00430000</div>
<div class="t " style="left:85.20px;top:0.80px;">32 13 8B C0 02 00 8B C0 00 8D 40 00 A0 00 43 00</div>
<div class="t " style="left:514.20px;top:0.80px;">2<span class="sq">■</span>  ¬.  .  .?C.</div>
<div class="cj" style="left:532.06px;top:-0.80px;color:#c0c0c0">嬂</div>
<div class="cj" style="left:567.78px;top:-0.80px;color:#c0c0c0">嬂</div>
<div class="cj" style="left:594.57px;top:-0.80px;color:#c0c0c0">岪</div>
<div class="t " style="left:6.20px;top:17.00px;">00430010</div>
<div class="t " style="left:85.20px;top:17.00px;">B8 08 F0 01 90 20 40 00 18 22 40 00 8C 25 40 00</div>
<div class="t " style="left:514.20px;top:17.00px;">???@.<span class="sq">■</span>"@.?@.</div>
<div class="t " style="left:6.20px;top:33.20px;">00430020</div>
<div class="t " style="left:85.20px;top:33.20px;">32 1F 8B C0 52 75 6E 74 69 6D 65 20 65 72 72 6F</div>
<div class="t " style="left:514.20px;top:33.20px;">2<span class="sq">■</span>  Runtime erro</div>
<div class="cj" style="left:532.06px;top:31.60px;color:#c0c0c0">嬂</div>
<div class="t " style="left:6.20px;top:49.40px;">00430030</div>
<div class="t " style="left:85.20px;top:49.40px;">72 20 20 20 20 20 61 74 20 30 30 30 30 30 30 30</div>
<div class="t " style="left:514.20px;top:49.40px;">r     at 0000000</div>
<div class="t " style="left:6.20px;top:65.60px;">00430040</div>
<div class="t " style="left:85.20px;top:65.60px;">30 00 8B C0 45 72 72 6F 72 00 8B C0 30 31 32 33</div>
<div class="t " style="left:514.20px;top:65.60px;">0.  Error.  0123</div>
<div class="cj" style="left:532.06px;top:64.00px;color:#c0c0c0">嬂</div>
<div class="cj" style="left:603.50px;top:64.00px;color:#c0c0c0">嬂</div>
<div class="t " style="left:6.20px;top:81.80px;">00430050</div>
<div class="t " style="left:85.20px;top:81.80px;">34 35 36 37 38 39 41 42 43 44 45 46 20 20 20 20</div>
<div class="t " style="left:514.20px;top:81.80px;">456789ABCDEF</div>
<div class="t " style="left:6.20px;top:98.00px;">00430060</div>
<div class="t " style="left:85.20px;top:98.00px;">20 20 20 20 20 20 20 20 20 20 20 20 20 20 20 20</div>
<div class="t " style="left:514.20px;top:98.00px;"></div>
<div class="t " style="left:6.20px;top:114.20px;">00430070</div>
<div class="t " style="left:85.20px;top:114.20px;">20 20 20 20 20 20 20 20 20 20 20 20 20 20 20 20</div>
<div class="t " style="left:514.20px;top:114.20px;"></div>
<div class="t " style="left:6.20px;top:130.40px;">00430080</div>
<div class="t " style="left:85.20px;top:130.40px;">20 20 20 20 20 20 20 20 20 20 20 20 20 20 20 20</div>
<div class="t " style="left:514.20px;top:130.40px;"></div>
<div class="t " style="left:6.20px;top:146.60px;">00430090</div>
<div class="t " style="left:85.20px;top:146.60px;">20 20 20 20 20 20 20 20 20 20 20 20 0D 0A 8B C0</div>
<div class="t " style="left:514.20px;top:146.60px;">            ..  </div>
<div class="cj" style="left:639.22px;top:145.00px;color:#c0c0c0">嬂</div>
<div class="t " style="left:6.20px;top:162.80px;">004300A0</div>
<div class="t " style="left:85.20px;top:162.80px;">00 00 00 00 00 00 40 00 00 00 40 00 00 00 00 00</div>
<div class="t " style="left:514.20px;top:162.80px;">......@...@.....</div>
<div class="t " style="left:6.20px;top:179.00px;">004300B0</div>
<div class="t " style="left:85.20px;top:179.00px;">00 00 00 00 02 00 00 00 06 00 00 00 02 00 00 00</div>
<div class="t " style="left:514.20px;top:179.00px;">....¬...<span class="sq">■</span>...¬...</div>
<div class="t " style="left:6.20px;top:195.20px;">004300C0</div>
<div class="t " style="left:85.20px;top:195.20px;">F0 23 00 00 00 00 00 00 00 00 00 00 00 00 00 00</div>
<div class="t " style="left:514.20px;top:195.20px;">?..............</div>
<div class="t " style="left:6.20px;top:211.40px;">004300D0</div>
<div class="t " style="left:85.20px;top:211.40px;">00 00 00 00 00 00 00 00 FE FF FF FF FF FF FF FF</div>
<div class="t " style="left:514.20px;top:211.40px;">........?ÿÿÿÿÿÿ</div>
<div class="t " style="left:6.20px;top:227.60px;">004300E0</div>
<div class="t " style="left:85.20px;top:227.60px;">FF FF FF FF FF FF FF 7F 00 00 00 00 00 00 00 80</div>
<div class="t " style="left:514.20px;top:227.60px;">ÿÿÿÿÿÿÿ<span class="sq">■</span>.......<span class="sq">■</span></div>
<div class="t " style="left:6.20px;top:243.80px;">004300F0</div>
<div class="t " style="left:85.20px;top:243.80px;">00 00 00 40 00 00 00 C0 00 00 00 00 00 00 00 00</div>
<div class="t " style="left:514.20px;top:243.80px;">...@...?........</div>
<div class="t " style="left:6.20px;top:260.00px;">00430100</div>
<div class="t " style="left:85.20px;top:260.00px;">01 00 00 00 02 00 00 00 03 00 00 00 44 04 F0 01</div>
<div class="t " style="left:514.20px;top:260.00px;">ƒ...¬...¯...D ¦?</div>
</div>
<div class="sb" style="left:666.4px;top:475.2px;width:18.8px;height:293.1px"></div>
<div class="th" style="left:667.6px;top:492.4px;width:16.6px;height:17.2px"></div>
<svg class="abs" style="left:669.8px;top:480.2px" width="12" height="8" viewBox="-6 -4 12 8"><path d="M-4 2.0L0 -2.0L4 2.0" stroke="#5e5e5e" stroke-width="1.9" fill="none"/></svg>
<svg class="abs" style="left:669.8px;top:756.0px" width="12" height="8" viewBox="-6 -4 12 8"><path d="M-4 -2.0L0 2.0L4 -2.0" stroke="#5e5e5e" stroke-width="1.9" fill="none"/></svg>
<div class="p" style="left:687.7px;top:475.1px;width:1011.9px;height:293.2px">
<div class="hl" style="left:0;top:0;width:1020px;height:16.30px;background:#800080"></div>
<div class="vl" style="left:79.3px;top:0;height:300px"></div>
<div class="vl" style="left:168.5px;top:0;height:300px"></div>
<svg class="abs" style="left:81.9px;top:0" width="14" height="294" viewBox="0 0 14 294"><path d="M3.3 0V66h6.4M9.7 78.4H3.3V294" stroke="#e4e4e4" stroke-width="1.7" fill="none"/></svg>
<div class="t " style="left:5.80px;top:0.10px;">0019FF84</div>
<div class="t " style="left:93.30px;top:0.10px;">772C3744</div>
<div class="t " style="left:174.30px;top:0.10px;">       kernel32.772C3744</div>
<div class="cj" style="left:174.30px;top:-1.30px;color:#c8c8c8">返</div>
<div class="cj" style="left:192.16px;top:-1.30px;color:#c8c8c8">回</div>
<div class="cj" style="left:210.02px;top:-1.30px;color:#c8c8c8">到</div>
<div class="t " style="left:5.80px;top:16.30px;">0019FF88</div>
<div class="t " style="left:93.30px;top:16.30px;">7FFDE000</div>
<div class="t " style="left:5.80px;top:32.50px;">0019FF8C</div>
<div class="t " style="left:93.30px;top:32.50px;">772C3720</div>
<div class="t " style="left:174.30px;top:32.50px;">kernel32.BaseThreadInitThunk</div>
<div class="t " style="left:5.80px;top:48.70px;">0019FF90</div>
<div class="t " style="left:93.30px;top:48.70px;">3C336F15</div>
<div class="t " style="left:5.80px;top:64.90px;">0019FF94</div>
<div class="t " style="left:93.30px;top:64.90px;">0019FFDC</div>
<div class="t " style="left:5.80px;top:81.10px;">0019FF98</div>
<div class="t " style="left:93.30px;top:81.10px;">77A7A064</div>
<div class="t " style="left:174.30px;top:81.10px;">       ntdll.77A7A064</div>
<div class="cj" style="left:174.30px;top:79.70px;color:#c8c8c8">返</div>
<div class="cj" style="left:192.16px;top:79.70px;color:#c8c8c8">回</div>
<div class="cj" style="left:210.02px;top:79.70px;color:#c8c8c8">到</div>
<div class="t " style="left:5.80px;top:97.30px;">0019FF9C</div>
<div class="t " style="left:93.30px;top:97.30px;">7FFDE000</div>
<div class="t " style="left:5.80px;top:113.50px;">0019FFA0</div>
<div class="t " style="left:93.30px;top:113.50px;">90777CC5</div>
<div class="t " style="left:5.80px;top:129.70px;">0019FFA4</div>
<div class="t " style="left:93.30px;top:129.70px;">00000000</div>
<div class="t " style="left:5.80px;top:145.90px;">0019FFA8</div>
<div class="t " style="left:93.30px;top:145.90px;">00000000</div>
<div class="t " style="left:5.80px;top:162.10px;">0019FFAC</div>
<div class="t " style="left:93.30px;top:162.10px;">7FFDE000</div>
<div class="t " style="left:5.80px;top:178.30px;">0019FFB0</div>
<div class="t " style="left:93.30px;top:178.30px;">00000000</div>
<div class="t " style="left:5.80px;top:194.50px;">0019FFB4</div>
<div class="t " style="left:93.30px;top:194.50px;">00000000</div>
<div class="t " style="left:5.80px;top:210.70px;">0019FFB8</div>
<div class="t " style="left:93.30px;top:210.70px;">00000000</div>
<div class="t " style="left:5.80px;top:226.90px;">0019FFBC</div>
<div class="t " style="left:93.30px;top:226.90px;">00000000</div>
<div class="t " style="left:5.80px;top:243.10px;">0019FFC0</div>
<div class="t " style="left:93.30px;top:243.10px;">90777CC5</div>
<div class="t " style="left:5.80px;top:259.30px;">0019FFC4</div>
<div class="t " style="left:93.30px;top:259.30px;">0019FFA0</div>
<div class="t " style="left:174.30px;top:259.30px;">UNICODE "    "</div>
<div class="cj" style="left:254.67px;top:257.90px;color:#c8c8c8">樑</div>
<div class="cj" style="left:272.53px;top:257.90px;color:#c8c8c8">迁</div>
<div class="t " style="left:5.80px;top:275.50px;">0019FFC8</div>
<div class="t " style="left:93.30px;top:275.50px;">00000000</div>
<div class="t " style="left:5.80px;top:291.70px;">0019FFCC</div>
<div class="t " style="left:93.30px;top:291.70px;">0019FFE4</div>
<div class="t " style="left:174.30px;top:291.70px;">           SEH           </div>
<div class="cj" style="left:174.30px;top:290.30px;color:#c8c8c8">指</div>
<div class="cj" style="left:192.16px;top:290.30px;color:#c8c8c8">向</div>
<div class="cj" style="left:210.02px;top:290.30px;color:#c8c8c8">下</div>
<div class="cj" style="left:227.88px;top:290.30px;color:#c8c8c8">一</div>
<div class="cj" style="left:245.74px;top:290.30px;color:#c8c8c8">个</div>
<div class="cj" style="left:308.25px;top:290.30px;color:#c8c8c8">记</div>
<div class="cj" style="left:326.11px;top:290.30px;color:#c8c8c8">录</div>
<div class="cj" style="left:343.97px;top:290.30px;color:#c8c8c8">的</div>
<div class="cj" style="left:361.83px;top:290.30px;color:#c8c8c8">指</div>
<div class="cj" style="left:379.69px;top:290.30px;color:#c8c8c8">针</div>
</div>
<div class="sb" style="left:1699.6px;top:475px;width:18.9px;height:293.3px"></div>
<div class="th" style="left:1701px;top:732px;width:16.4px;height:17px"></div>
<svg class="abs" style="left:1703.2px;top:480.2px" width="12" height="8" viewBox="-6 -4 12 8"><path d="M-4 2.0L0 -2.0L4 2.0" stroke="#5e5e5e" stroke-width="1.9" fill="none"/></svg>
<svg class="abs" style="left:1703.2px;top:756.2px" width="12" height="8" viewBox="-6 -4 12 8"><path d="M-4 -2.0L0 2.0L4 -2.0" stroke="#5e5e5e" stroke-width="1.9" fill="none"/></svg>
<div class="abs" style="left:0;top:768.3px;width:1724px;height:24.3px;background:#f0f0f0"></div>
<div class="abs" style="left:0;top:768.3px;width:6px;height:41.7px;background:#e8e9ea"></div>
<div class="sm" style="left:14.4px;top:775.6px;color:#f00;font-weight:normal;font-size:12.6px;transform:scaleX(.8);text-shadow:.5px 0 0 currentColor">M1</div>
<div class="sm" style="left:43.2px;top:775.6px;color:#000;font-weight:normal;font-size:12.6px;transform:scaleX(.8);text-shadow:.5px 0 0 currentColor">M2</div>
<div class="sm" style="left:72.4px;top:775.6px;color:#000;font-weight:normal;font-size:12.6px;transform:scaleX(.8);text-shadow:.5px 0 0 currentColor">M3</div>
<div class="sm" style="left:101.4px;top:775.6px;color:#000;font-weight:normal;font-size:12.6px;transform:scaleX(.8);text-shadow:.5px 0 0 currentColor">M4</div>
<div class="sm" style="left:130.6px;top:775.6px;color:#000;font-weight:normal;font-size:12.6px;transform:scaleX(.8);text-shadow:.5px 0 0 currentColor">M5</div>
<div class="sm" style="left:259.6px;top:779px;font-weight:normal;font-size:11px;letter-spacing:.7px">Command:</div>
<div class="abs" style="left:331.4px;top:772.6px;width:220px;height:17.6px;background:#fff;border:1.2px solid;border-color:#6e6e6e #e8e8e8 #e8e8e8 #6e6e6e"></div>
<div class="abs" style="left:533.4px;top:774px;width:17px;height:15.2px;background:#f0f0f0;border:1px solid;border-color:#fff #808080 #808080 #fff"></div>
<svg class="abs" style="left:537.4px;top:779px" width="9" height="5" viewBox="0 0 9 5"><path d="M.4 .4h8.2L4.5 4.6z" fill="#000"/></svg>
<div class="abs" style="left:565.4px;top:774.4px;width:1018px;height:16px;background:#f0f0f0;border:1.2px solid;border-color:#a8a8a8 #fff #fff #a8a8a8"></div>
<div class="sm" style="left:1611.0px;top:775.6px;color:#f00;font-weight:normal;font-size:12.4px;text-shadow:.35px 0 0 currentColor;transform:scaleX(.92)">ESP</div>
<div class="sm" style="left:1651.2px;top:775.6px;color:#000;font-weight:normal;font-size:12.4px;text-shadow:.35px 0 0 currentColor;transform:scaleX(.92)">EBP</div>
<div class="sm" style="left:1688.6px;top:775.6px;color:#000;font-weight:normal;font-size:12.4px;text-shadow:.35px 0 0 currentColor;transform:scaleX(.755)">NONE</div>
<div class="abs" style="left:6px;top:792.6px;width:1715px;height:17.4px;background:#c0c0c0"></div>
<div class="abs" style="left:7.4px;top:793px;width:1663.4px;height:17px;border:1.2px solid;border-color:#808080 #fff #fff #808080"></div>
<div class="abs" style="left:1673px;top:793px;width:47.2px;height:17px;border:1.2px solid;border-color:#808080 #fff #fff #808080"></div>
<div class="st" style="left:13.6px">起始:</div>
<div class="st" style="left:50.0px">43006B</div>
<div class="st" style="left:104.8px">结束:</div>
<div class="st" style="left:141.2px">43006B</div>
<div class="st" style="left:197.4px">当前值:</div>
<div class="st" style="left:247.0px">20202020</div>
<svg class="abs" style="left:0;top:0;pointer-events:none" width="1724" height="810" viewBox="0 0 1724 810">
<path d="M66.2 129.3L90.9 114.0L146.8 77.5L191.3 48.3L194.8 51.6L203.9 36.1L186.2 39.4L187.3 42.5L143.8 73.0L89.2 111.4L65.8 128.7z" fill="#fa3a3c"/>
<path d="M469.6 431.8L342.2 334.6L231.5 250.6L102.1 152.2L105.2 148.9L87.5 146.3L95.0 161.7L98.5 157.0L228.9 254.1L340.3 337.2L469.0 432.6z" fill="#fa3a3c"/>
<path d="M201.9 168.2V178.1L211.8 173.1z" fill="#fa3a3c"/>
<text x="483" y="442.6" font-family="Noto Sans CJK SC,sans-serif" font-size="20" fill="#fff">点击F2，打断点，之后点击上面的开始</text>
</svg>
</body></html>
